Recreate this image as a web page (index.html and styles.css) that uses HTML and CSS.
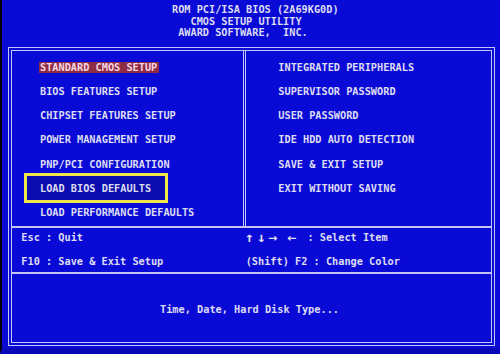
FILE: index.html
```html
<!DOCTYPE html>
<html lang="en">
<head>
  <meta charset="UTF-8">
  <title>CMOS Setup Utility</title>
  <link rel="stylesheet" href="styles.css">
</head>
<body>
  <div class="screen">

    <header class="banner">
      <div class="line">ROM PCI/ISA BIOS (2A69KG0D)</div>
      <div class="line">   CMOS SETUP UTILITY</div>
      <div class="line"> AWARD SOFTWARE,  INC.</div>
    </header>

    <main class="frame">
      <div class="frame-inner">

        <section class="menu">
          <ul class="menu-col menu-left">
            <li><span class="item current">STANDARD CMOS SETUP</span></li>
            <li><span class="item">BIOS FEATURES SETUP</span></li>
            <li><span class="item">CHIPSET FEATURES SETUP</span></li>
            <li><span class="item">POWER MANAGEMENT SETUP</span></li>
            <li><span class="item">PNP/PCI CONFIGURATION</span></li>
            <li><span class="item marked">LOAD BIOS DEFAULTS</span></li>
            <li><span class="item">LOAD PERFORMANCE DEFAULTS</span></li>
          </ul>
          <ul class="menu-col menu-right">
            <li><span class="item">INTEGRATED PERIPHERALS</span></li>
            <li><span class="item">SUPERVISOR PASSWORD</span></li>
            <li><span class="item">USER PASSWORD</span></li>
            <li><span class="item">IDE HDD AUTO DETECTION</span></li>
            <li><span class="item">SAVE &amp; EXIT SETUP</span></li>
            <li><span class="item">EXIT WITHOUT SAVING</span></li>
          </ul>
        </section>

        <section class="keys">
          <div class="line key-left">Esc : Quit</div>
          <div class="line key-right"><span class="arrow">↑</span> <span class="arrow">↓</span> <span class="arrow">→</span>  <span class="arrow">←</span>  : Select Item</div>
          <div class="line key-left">F10 : Save &amp; Exit Setup</div>
          <div class="line key-right">(Shift) F2 : Change Color</div>
        </section>

        <section class="help">Time, Date, Hard Disk Type...</section>

      </div>
    </main>

  </div>
</body>
</html>
```

FILE: styles.css
```css
/* --- Basic Setup & Variables --- */
:root {
  --bios-blue: #0a0ad6;
  --bios-blue-dark: #0c0cae;
  --text-color: #dcdcf2;
  --line-color: #c4c4f6;
  --select-bg: #8e2c46;
  --select-text: #f6d6e0;
  --mark-color: #f2e54a;
  --cell: 10.25px;
  --row: 24.3px;
}

body {
  margin: 0;
  background: #000;
}

.screen {
  box-sizing: border-box;
  width: 500px;
  height: 354px;
  display: flex;
  flex-direction: column;
  background-color: var(--bios-blue);
  border-left: 2px solid #000;
  border-bottom: 6px solid #0808b8;
  color: var(--text-color);
  font-family: "DejaVu Sans Mono", "Liberation Mono", monospace;
  font-size: var(--cell);
  font-weight: bold;
}

.line {
  white-space: pre;
}

/* --- Banner --- */
.banner {
  padding: 4px 0 0 170px;
  line-height: 11.5px;
}

/* --- Double frame --- */
.frame {
  box-sizing: border-box;
  height: 299px;
  margin: 8.5px 5px 0 6px;
  padding: 2px;
  border: 1px solid var(--line-color);
}

.frame-inner {
  box-sizing: border-box;
  height: 100%;
  display: flex;
  flex-direction: column;
  border: 1px solid var(--line-color);
}

/* --- Menu --- */
.menu {
  height: 175px;
  display: grid;
  grid-template-columns: 233.5px 1fr;
}

.menu-col {
  list-style: none;
  margin: 0;
  padding: 3.5px 0 0 0;
  line-height: var(--row);
}

.menu-left {
  box-sizing: border-box;
  padding-left: 28px;
  border-right: 3px double var(--line-color);
}

.menu-right {
  padding-left: 32.8px;
}

.item {
  display: inline-block;
}

.item.current {
  margin-left: -1px;
  padding: 0 2px 0 1px;
  line-height: 11px;
  background-color: var(--select-bg);
  color: var(--select-text);
}

.item.marked {
  margin-left: -13px;
  padding: 0 14px 0 13px;
  background-color: var(--bios-blue-dark);
  outline: 3px solid var(--mark-color);
}

/* --- Key hints --- */
.keys {
  display: grid;
  grid-template-columns: 233.7px 1fr;
  row-gap: 12.15px;
  padding: 2.5px 0 5px 0;
  border-top: 2px solid var(--line-color);
  border-bottom: 2px solid var(--line-color);
  line-height: 12.15px;
}

.key-left {
  padding-left: 9.3px;
}

.arrow {
  display: inline-block;
  transform: scale(1.5, 1.3);
}

/* --- Help line --- */
.help {
  flex: 1;
  padding: 29px 4px 0 0;
  text-align: center;
  line-height: 12px;
}
```
